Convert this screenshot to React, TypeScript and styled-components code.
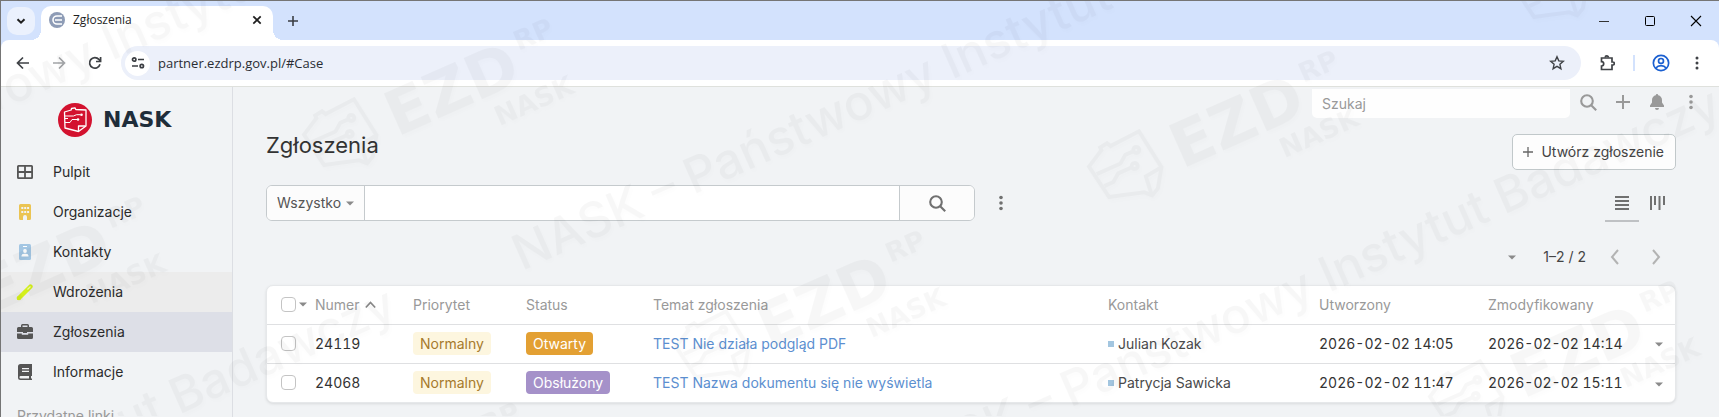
import React from 'react';
import styled, { createGlobalStyle } from 'styled-components';

const GlobalStyle = createGlobalStyle`
  *, *::before, *::after { box-sizing: border-box; }
  body { margin: 0; background: #f1f3f5; }
  button, input, select { font: inherit; color: inherit; }
`;

const ui = `Inter, "Liberation Sans", sans-serif`;
const chrome = `"Open Sans", "Noto Sans", sans-serif`;

/* ---------- browser frame ---------- */

const Window = styled.div`
  position: relative;
  display: flex;
  flex-direction: column;
  height: 100vh;
  overflow: hidden;
  border-top: 1px solid #757575;
  border-left: 1px solid #757575;
  background: #d3e2fd;
  font-family: ${ui};
  font-size: 14px;
  line-height: 20px;
  color: #333;
`;

const TabStrip = styled.div`
  display: flex;
  align-items: center;
  flex: none;
  height: 39px;
  padding: 0 0 0 6px;
  font-family: ${chrome};
  font-size: 12px;
  color: #1f1f1f;
`;

const PlainButton = styled.button<{ $w?: number; $h?: number }>`
  display: inline-flex;
  align-items: center;
  justify-content: center;
  flex: none;
  width: ${p => p.$w ?? 36}px;
  height: ${p => p.$h ?? 34}px;
  padding: 0;
  border: 0;
  background: none;
  cursor: pointer;
`;

const TabSearch = styled(PlainButton)`
  margin-right: 6px;
  border-radius: 10px;
  background: #ebf1fd;
`;

const Tab = styled.div`
  position: relative;
  display: flex;
  align-items: center;
  align-self: flex-end;
  width: 232px;
  height: 34px;
  padding: 0 6px 6px 8px;
  gap: 8px;
  border-radius: 10px 10px 0 0;
  background: #fff;

  &::before, &::after {
    content: '';
    position: absolute;
    bottom: 0;
    width: 10px;
    height: 10px;
  }
  &::before { left: -10px; background: radial-gradient(circle at 0 0, transparent 10px, #fff 10px); }
  &::after { right: -10px; background: radial-gradient(circle at 100% 0, transparent 10px, #fff 10px); }
`;

const TabTitle = styled.span`
  flex: 1;
`;

const Spacer = styled.div`
  flex: 1;
`;

const Toolbar = styled.div`
  display: flex;
  align-items: center;
  flex: none;
  height: 47px;
  padding: 0 4px;
  border-bottom: 1px solid #dfe1dd;
  border-radius: 8px 8px 0 0;
  background: #fff;
`;

const AddressBar = styled.div`
  display: flex;
  align-items: center;
  flex: 1;
  height: 34px;
  margin: 0 8px;
  padding: 0 14px 0 4px;
  border-radius: 17px;
  background: #ecf0fa;
`;

const SiteInfo = styled(PlainButton)`
  border-radius: 50%;
  background: #fff;
`;

const AddressInput = styled.input`
  flex: 1;
  min-width: 0;
  height: 24px;
  padding: 0 8px;
  border: 0;
  outline: 0;
  background: none;
  font-family: ${chrome};
  font-size: 13px;
  color: #2a2d33;
`;

const Divider = styled.span`
  width: 2px;
  height: 16px;
  margin: 0 8px;
  background: #d3e2fd;
`;

/* ---------- application ---------- */

const Page = styled.div`
  display: flex;
  flex: 1;
  min-height: 0;
  background: #f1f3f5;
`;

const Sidebar = styled.nav`
  flex: none;
  width: 232px;
  border-right: 1px solid #dcdee3;
`;

const Brand = styled.a`
  display: flex;
  align-items: center;
  gap: 11px;
  height: 65px;
  padding: 0 0 0 57px;
  text-decoration: none;
  font-family: "DejaVu Sans", sans-serif;
  font-weight: 700;
  font-size: 22px;
  color: #1f2d3a;
`;

const NavList = styled.ul`
  margin: 0;
  padding: 0;
  list-style: none;
`;

const NavLink = styled.a<{ $tone?: 'hover' | 'active' }>`
  display: flex;
  align-items: center;
  height: 40px;
  padding-left: 15px;
  gap: 19px;
  color: #2b2b2b;
  text-decoration: none;
  background: ${p => (p.$tone === 'active' ? '#dddfe7' : p.$tone === 'hover' ? '#ececec' : 'transparent')};
`;

const NavCaption = styled.div`
  padding: 14px 16px;
  color: #999;
`;

const Main = styled.main`
  flex: 1;
  min-width: 0;
  padding: 2px 43px 15px 33px;
`;

const HeaderBar = styled.header`
  display: flex;
  justify-content: flex-end;
  align-items: flex-start;
  height: 29px;
  margin-right: -32px;
`;

const GlobalSearch = styled.input`
  width: 258px;
  height: 29px;
  padding: 0 10px;
  border: 0;
  outline: 0;
  border-radius: 0 0 5px 5px;
  background: #fefefe;
  &::placeholder { color: #999; opacity: 1; }
`;

const TitleRow = styled.div`
  display: flex;
  align-items: flex-start;
  justify-content: space-between;
  padding-top: 12px;
`;

const Title = styled.h1`
  margin: 0;
  font-size: 22px;
  line-height: 30px;
  font-weight: 400;
  color: #333;
`;

const CreateButton = styled.button`
  display: flex;
  align-items: center;
  gap: 8px;
  height: 36px;
  margin-top: 4px;
  padding: 0 11px 0 10px;
  border: 1px solid #c1c8ca;
  border-radius: 5px;
  background: #fdfdfd;
  color: #444;
  cursor: pointer;
`;

const FilterRow = styled.div`
  display: flex;
  align-items: flex-start;
  margin-top: 15px;
`;

const SearchGroup = styled.form`
  display: flex;
  flex: 0 1 709px;
  height: 36px;
  border: 1px solid #c5cacd;
  border-radius: 6px;
  background: #fff;
  overflow: hidden;
`;

const Picker = styled.div`
  display: grid;
  grid-template-columns: 97px;
  align-items: center;
  border-right: 1px solid #c5cacd;
  background: #fcfcfc;
  & > * { grid-area: 1 / 1; }
  & > svg { justify-self: end; margin-right: 10px; pointer-events: none; }
`;

const PickerSelect = styled.select`
  appearance: none;
  height: 34px;
  width: 97px;
  padding: 0 10px;
  border: 0;
  outline: 0;
  background: none;
  color: #555;
`;

const SearchInput = styled.input`
  flex: 1;
  min-width: 0;
  border: 0;
  outline: 0;
  padding: 0 10px;
  background: #fff;
`;

const SearchButton = styled(PlainButton)`
  border-left: 1px solid #c5cacd;
  background: #fcfcfc;
`;

const ViewButton = styled(PlainButton)<{ $on?: boolean }>`
  border-bottom: 2px solid ${p => (p.$on ? '#bfc1c4' : 'transparent')};
`;

const Pager = styled.div`
  display: flex;
  align-items: center;
  justify-content: flex-end;
  height: 40px;
  margin-top: 15px;
  color: #444;
`;

const Range = styled.span`
  margin: 0 8px 0 14px;
`;

const Card = styled.div`
  margin-top: 8px;
  overflow: hidden;
  border: 1px solid #e6e8ea;
  border-radius: 7px;
  background: #fff;
  box-shadow: 0 1px 3px rgba(0, 0, 0, 0.1);
`;

const Table = styled.table`
  width: 100%;
  table-layout: fixed;
  border-collapse: collapse;

  th, td {
    padding: 0;
    text-align: left;
    font-weight: 400;
    white-space: nowrap;
  }
  th { height: 38px; color: #999; }
  td { height: 39px; border-top: 1px solid #dfe0e2; }
  th:first-child, td:first-child { padding-left: 14px; }
`;

const Col = styled.col<{ $w?: number }>`
  width: ${p => (p.$w ? `${p.$w}px` : 'auto')};
`;

const Inline = styled.span<{ $gap: number }>`
  display: flex;
  align-items: center;
  gap: ${p => p.$gap}px;
`;

const Checkbox = styled.input`
  appearance: none;
  display: block;
  flex: none;
  width: 15px;
  height: 15px;
  margin: 0;
  border: 1px solid #c4c4c4;
  border-radius: 4px;
  background: #fff;
`;

const tones = {
  warn: ['#fdf6df', '#a67a2c'],
  open: ['#e3a033', '#fff'],
  done: ['#a591c9', '#fff'],
};

const Badge = styled.span<{ $tone: keyof typeof tones }>`
  display: block;
  width: fit-content;
  height: 23px;
  padding: 0 7px;
  border-radius: 4px;
  line-height: 23px;
  background: ${p => tones[p.$tone][0]};
  color: ${p => tones[p.$tone][1]};
`;

const SubjectLink = styled.a`
  color: #5c8fd0;
  text-decoration: none;
`;

const ContactLink = styled.a`
  display: flex;
  align-items: center;
  gap: 4px;
  color: #4a4a4a;
  text-decoration: none;
  &::before { content: ''; width: 6px; height: 6px; background: #a3c6e0; }
`;

const Figures = styled.span`
  font-variant-numeric: tabular-nums;
`;

const Overlay = styled.svg`
  position: absolute;
  top: -1px;
  left: -1px;
  width: 100%;
  height: 100%;
  pointer-events: none;
  filter: drop-shadow(2px 3px 2px rgba(0, 0, 0, 0.4));
  opacity: 0.028;
`;

/* ---------- icons ---------- */

const Caret = ({ color = '#8a8a8a' }: { color?: string }) => (
  <svg width="8" height="5" viewBox="0 0 8 5" aria-hidden="true"><path d="M0 .5h8L4 4.5z" fill={color} /></svg>
);

const Dots = ({ color, r = 1.8, step = 5.5 }: { color: string; r?: number; step?: number }) => (
  <svg width="6" height="16" viewBox="0 0 6 16" fill={color} aria-hidden="true">
    <circle cx="3" cy={8 - step} r={r} /><circle cx="3" cy="8" r={r} /><circle cx="3" cy={8 + step} r={r} />
  </svg>
);

const Magnifier = ({ color }: { color: string }) => (
  <svg width="17" height="17" viewBox="0 0 17 17" fill="none" stroke={color} strokeWidth="2.1" aria-hidden="true">
    <circle cx="7" cy="7" r="5.8" /><path d="M11.2 11.2 16.2 16.2" />
  </svg>
);

const Plus = ({ size, color, w }: { size: number; color: string; w: number }) => (
  <svg width={size} height={size} viewBox="0 0 14 14" fill="none" stroke={color} strokeWidth={w} aria-hidden="true">
    <path d="M7 0v14M0 7h14" />
  </svg>
);

const Chevron = ({ d }: { d: string }) => (
  <svg width="16" height="16" viewBox="0 0 16 16" fill="none" stroke="#b3b3b3" strokeWidth="2" aria-hidden="true"><path d={d} /></svg>
);

const ChromeIcon = ({ children, color = '#3f4246', w = 1.7, size = 16 }: { children: React.ReactNode; color?: string; w?: number; size?: number }) => (
  <svg width={size} height={size} viewBox="0 0 16 16" fill="none" stroke={color} strokeWidth={w} aria-hidden="true">{children}</svg>
);

/* Outline of the country with circuit traces and a folded corner. */
const emblem = 'M2 8 11 3 11 1.5 15 1 16 3 32 2 35 23 29 32 25 34 22 31 12 28 5 26Z';

const BrandMark = () => (
  <svg width="34" height="34" viewBox="0 0 34 34" fill="none" aria-hidden="true">
    <circle cx="17" cy="17" r="17" fill="#d3122f" />
    <g stroke="#fff" strokeWidth="1.3" strokeLinejoin="round">
      <path d="M6.5 9 13.200 7l.3-1.500 3.500-.7.8 1.700 10.200.5v16L20.500 28.500 7 25Z" />
      <path d="M20.500 28.500v-5.500h7" />
      <path d="M7 13h8.500l3-1.300h4M7 19.500h5l2-3h5M7 15.500h3" strokeWidth="1" />
    </g>
    <circle cx="23.500" cy="11.700" r="1.300" fill="#fff" /><circle cx="20" cy="16.500" r="1.300" fill="#fff" />
  </svg>
);

const icons: Record<string, React.ReactNode> = {
  grid: <path fillRule="evenodd" fill="#555" d="M3.500 2h13a1.500 1.500 0 0 1 1.500 1.500v11a1.500 1.500 0 0 1-1.500 1.500h-13A1.500 1.500 0 0 1 2 14.500v-11A1.500 1.500 0 0 1 3.500 2Zm.3 1.800v4.300h5.300V3.800Zm7.100 0v4.300h5.300V3.800Zm-7.100 6.100v4.300h5.300V9.900Zm7.100 0v4.300h5.300V9.900Z" />,
  building: <path fillRule="evenodd" fill="#ebc453" d="M5.500 1h9A1.500 1.500 0 0 1 16 2.500v13a1.500 1.500 0 0 1-1.500 1.500H12v-3a2 2 0 0 0-4 0v3H5.500A1.500 1.500 0 0 1 4 15.500v-13A1.500 1.500 0 0 1 5.500 1Zm.8 3v2h2V4Zm2.900 0v2h2V4Zm2.900 0v2h2V4Zm-5.800 4v2h2V8Zm2.900 0v2h2V8Zm2.900 0v2h2V8Z" />,
  badge: <><rect x="4" y="1" width="12" height="16" rx="1.500" fill="#a3c6e3" /><path d="M8 3h4v1H8z" fill="#fff" /><circle cx="10" cy="8" r="1.900" fill="#fff" /><path d="M6.500 13.500a2.500 2.500 0 0 1 2.500-2.700h2a2.500 2.500 0 0 1 2.500 2.700Z" fill="#fff" /></>,
  pen: <><path d="M4 15 15.500 3.500" stroke="#d4f01c" strokeWidth="4.400" strokeLinecap="round" /><path d="m2 17 .6-4 3.400 3.400Z" fill="#d4f01c" /><path d="m12.500 6.500 3-3" stroke="#f2fbb0" strokeWidth="1.200" /></>,
  briefcase: <path fillRule="evenodd" fill="#555" d="M6 4V2.500A1.500 1.500 0 0 1 7.500 1h5A1.500 1.500 0 0 1 14 2.500V4h2.500A1.500 1.500 0 0 1 18 5.500V9h-6v1H8V9H2V5.500A1.500 1.500 0 0 1 3.500 4Zm1.500 0h5V2.500h-5ZM2 10.500h4.800v1.300h6.400v-1.300H18v4A1.500 1.500 0 0 1 16.500 16h-13A1.500 1.500 0 0 1 2 14.500Z" />,
  book: <path fillRule="evenodd" fill="#555" d="M5.500 1H17v12h-1v2.500h1V17H5.500A2.500 2.500 0 0 1 3 14.500v-11A2.500 2.500 0 0 1 5.500 1ZM7 5v1.200h7V5Zm0 2.800V9h7V7.800ZM5.700 13a1.200 1.200 0 0 0 0 2.500H14V13Z" />,
};

const NavIcon = ({ name }: { name: string }) => (
  <svg width="18" height="18" viewBox="1 0 18 18" aria-hidden="true">{icons[name]}</svg>
);

/* ---------- watermark ---------- */

const slogans = [[522, 271], [899, 484], [-318, 252], [-426, 684]];
const logos = [[397, 137], [1182, 169], [769, 349], [1523, 399], [-11, 315], [1607, -11], [364, 521]];

const Watermark = () => (
  <Overlay aria-hidden="true">
    {slogans.map(([x, y]) => (
      <text key={x} transform={`translate(${x} ${y}) rotate(-24)`} fontFamily="Inter, sans-serif" fontWeight="500" fontSize="49">
        NASK – Państwowy Instytut Badawczy
      </text>
    ))}
    {logos.map(([x, y]) => (
      <g key={x} transform={`translate(${x} ${y}) rotate(-24)`} fontFamily="DejaVu Sans, sans-serif" fontWeight="700">
        <g transform="translate(-88 -56) scale(2)" fill="none" stroke="#000" strokeWidth="2">
          <path d={emblem} />
          <path d="M25 33 26 24 35 23M4 13h13l4-3h5M5 20h5l4-3h8" />
          <circle cx="27" cy="10" r="1.500" /><circle cx="23" cy="17" r="1.500" />
        </g>
        <text fontSize="62">EZD</text>
        <text x="146" y="-29" fontSize="27">RP</text>
        <text x="98" y="32" fontSize="27">NASK</text>
      </g>
    ))}
  </Overlay>
);

/* ---------- data ---------- */

const nav: { label: string; icon: string; tone?: 'hover' | 'active' }[] = [
  { label: 'Pulpit', icon: 'grid' },
  { label: 'Organizacje', icon: 'building' },
  { label: 'Kontakty', icon: 'badge' },
  { label: 'Wdrożenia', icon: 'pen', tone: 'hover' },
  { label: 'Zgłoszenia', icon: 'briefcase', tone: 'active' },
  { label: 'Informacje', icon: 'book' },
];

const cases: { id: string; status: string; tone: 'open' | 'done'; subject: string; contact: string; created: string; modified: string }[] = [
  { id: '24119', status: 'Otwarty', tone: 'open', subject: 'TEST Nie działa podgląd PDF', contact: 'Julian Kozak', created: '2026-02-02 14:05', modified: '2026-02-02 14:14' },
  { id: '24068', status: 'Obsłużony', tone: 'done', subject: 'TEST Nazwa dokumentu się nie wyświetla', contact: 'Patrycja Sawicka', created: '2026-02-02 11:47', modified: '2026-02-02 15:11' },
];

const BrowserChrome = () => (
  <>
    <TabStrip>
      <TabSearch $w={28} $h={28} aria-label="Wyszukaj karty">
        <ChromeIcon color="#1f1f1f" w={2}><path d="m4.500 6.200 3.500 3.500 3.500-3.500" /></ChromeIcon>
      </TabSearch>
      <Tab>
        <svg width="16" height="16" viewBox="0 0 16 16" fill="none" aria-hidden="true">
          <circle cx="8" cy="8" r="8" fill="#8e9cb6" />
          <path d="M13 4H8a4 4 0 0 0 0 8h5M6 8h7" stroke="#fff" strokeWidth="1.600" />
        </svg>
        <TabTitle>Zgłoszenia</TabTitle>
        <PlainButton $w={20} $h={20} aria-label="Zamknij kartę">
          <ChromeIcon color="#1f1f1f"><path d="m4.300 4.300 7.400 7.400M11.700 4.300 4.300 11.700" /></ChromeIcon>
        </PlainButton>
      </Tab>
      <PlainButton $w={40} aria-label="Nowa karta"><Plus size={10} color="#3a3d42" w={2.2} /></PlainButton>
      <Spacer />
      <PlainButton $w={46} aria-label="Minimalizuj"><ChromeIcon color="#333" w={1}><path d="M3 8.500h10" /></ChromeIcon></PlainButton>
      <PlainButton $w={46} aria-label="Maksymalizuj"><ChromeIcon color="#000" w={1}><rect x="3.500" y="3.500" width="9" height="9" rx="1" /></ChromeIcon></PlainButton>
      <PlainButton $w={46} aria-label="Zamknij"><ChromeIcon color="#000" w={1.1}><path d="m3 3 10 10M13 3 3 13" /></ChromeIcon></PlainButton>
    </TabStrip>
    <Toolbar>
      <PlainButton aria-label="Wstecz"><ChromeIcon><path d="M14 8H3M8 2.500 2.500 8 8 13.500" /></ChromeIcon></PlainButton>
      <PlainButton aria-label="Dalej"><ChromeIcon color="#a3a5a8"><path d="M2 8h11M8 2.500 13.500 8 8 13.500" /></ChromeIcon></PlainButton>
      <PlainButton aria-label="Odśwież"><ChromeIcon><path d="M13 9.300A5.300 5.300 0 1 1 11.900 4.400L13.500 6M13.600 2v4.500H9" /></ChromeIcon></PlainButton>
      <AddressBar>
        <SiteInfo $w={25} $h={25} aria-label="Informacje o stronie">
          <ChromeIcon color="#3a3d42"><circle cx="4.200" cy="4.500" r="1.700" /><path d="M8 4.500h6M2 11h6" /><circle cx="11.800" cy="11" r="1.700" /></ChromeIcon>
        </SiteInfo>
        <AddressInput aria-label="Adres" defaultValue="partner.ezdrp.gov.pl/#Case" />
        <PlainButton $w={20} aria-label="Dodaj do zakładek">
          <ChromeIcon w={1.4}><path d="m8 1.800 1.800 4.100 4.500.4-3.400 3 1 4.400L8 11.400l-3.900 2.300 1-4.400-3.400-3 4.500-.4Z" /></ChromeIcon>
        </PlainButton>
      </AddressBar>
      <PlainButton aria-label="Rozszerzenia">
        <ChromeIcon><path d="M2.500 3H13v4h.800a1.300 1.300 0 0 1 0 3H13v4.500H2.500v-3.500a2.200 2.200 0 0 0 0-4.400Z" /><path d="M6.200 2.500a1.600 1.600 0 0 1 3.200 0" /></ChromeIcon>
      </PlainButton>
      <Divider />
      <PlainButton aria-label="Profil">
        <ChromeIcon color="#1a5fd0" size={18} w={1.5}><circle cx="8" cy="8" r="6.800" /><circle cx="8" cy="6.200" r="2.200" /><path d="M3.500 12.500c2-2.800 7-2.800 9 0" /></ChromeIcon>
      </PlainButton>
      <PlainButton aria-label="Menu przeglądarki"><Dots color="#3f4246" r={1.5} step={5} /></PlainButton>
    </Toolbar>
  </>
);

export default function App() {
  return (
    <Window>
      <GlobalStyle />
      <BrowserChrome />
      <Page>
        <Sidebar>
          <Brand href="#"><BrandMark />NASK</Brand>
          <NavList>
            {nav.map(n => (
              <li key={n.label}><NavLink href="#" $tone={n.tone}><NavIcon name={n.icon} />{n.label}</NavLink></li>
            ))}
          </NavList>
          <NavCaption>Przydatne linki</NavCaption>
        </Sidebar>
        <Main>
          <HeaderBar>
            <GlobalSearch aria-label="Szukaj" placeholder="Szukaj" />
            <PlainButton $h={26} aria-label="Szukaj w systemie"><Magnifier color="#999" /></PlainButton>
            <PlainButton $w={34} $h={26} aria-label="Dodaj"><Plus size={14} color="#999" w={2} /></PlainButton>
            <PlainButton $w={34} $h={26} aria-label="Powiadomienia">
              <svg width="16" height="16" viewBox="0 0 16 16" fill="#999" aria-hidden="true"><path d="M8 0a1.300 1.300 0 0 0-1.200 1.300C4.500 1.800 3 3.700 3 6v2.500L1 11.500V13h14v-1.500l-2-3V6c0-2.300-1.500-4.200-3.800-4.700A1.300 1.300 0 0 0 8 0ZM6 14a2 2 0 0 0 4 0Z" /></svg>
            </PlainButton>
            <PlainButton $w={34} $h={26} aria-label="Menu"><Dots color="#999" /></PlainButton>
          </HeaderBar>
          <TitleRow>
            <Title>Zgłoszenia</Title>
            <CreateButton><Plus size={10} color="#666" w={1.8} />Utwórz zgłoszenie</CreateButton>
          </TitleRow>
          <FilterRow>
            <SearchGroup>
              <Picker>
                <PickerSelect aria-label="Filtr"><option>Wszystko</option></PickerSelect>
                <Caret />
              </Picker>
              <SearchInput aria-label="Szukana fraza" />
              <SearchButton type="button" $w={75} aria-label="Wyszukaj"><Magnifier color="#707070" /></SearchButton>
            </SearchGroup>
            <PlainButton $w={52} $h={36} aria-label="Więcej"><Dots color="#707070" /></PlainButton>
            <Spacer />
            <ViewButton $on $w={34} $h={37} aria-label="Widok listy">
              <svg width="14" height="14" viewBox="0 0 14 14" aria-hidden="true"><path d="M0 1h14M0 5h14M0 9h14M0 13h14" stroke="#707070" strokeWidth="2" /></svg>
            </ViewButton>
            <ViewButton $w={37} $h={37} aria-label="Widok kanban">
              <svg width="15" height="14" viewBox="0 0 15 14" aria-hidden="true"><path d="M1 0v14M5 0v9M9.500 0v14M14 0v9" stroke="#707070" strokeWidth="2" /></svg>
            </ViewButton>
          </FilterRow>
          <Pager>
            <PlainButton $w={34} aria-label="Działania"><Caret /></PlainButton>
            <Range>1–2 / 2</Range>
            <PlainButton $w={41} aria-label="Poprzednia strona"><Chevron d="m11 1-6 7 6 7" /></PlainButton>
            <PlainButton $w={41} aria-label="Następna strona"><Chevron d="m5 1 6 7-6 7" /></PlainButton>
          </Pager>
          <Card>
            <Table>
              <colgroup>
                <Col $w={48} /><Col $w={98} /><Col $w={113} /><Col $w={127} /><Col /><Col $w={211} /><Col $w={169} /><Col $w={167} /><Col $w={20} />
              </colgroup>
              <thead>
                <tr>
                  <th><Inline $gap={3}><Checkbox type="checkbox" aria-label="Zaznacz wszystkie" /><Caret /></Inline></th>
                  <th>
                    <Inline $gap={5}>
                      Numer
                      <svg width="11" height="8" viewBox="0 0 11 8" fill="none" stroke="#888" strokeWidth="1.700" aria-hidden="true"><path d="m.8 6.500 4.700-5 4.700 5" /></svg>
                    </Inline>
                  </th>
                  <th>Priorytet</th>
                  <th>Status</th>
                  <th>Temat zgłoszenia</th>
                  <th>Kontakt</th>
                  <th>Utworzony</th>
                  <th>Zmodyfikowany</th>
                  <th aria-label="Akcje" />
                </tr>
              </thead>
              <tbody>
                {cases.map(c => (
                  <tr key={c.id}>
                    <td><Checkbox type="checkbox" aria-label={`Zaznacz ${c.id}`} /></td>
                    <td><Figures>{c.id}</Figures></td>
                    <td><Badge $tone="warn">Normalny</Badge></td>
                    <td><Badge $tone={c.tone}>{c.status}</Badge></td>
                    <td><SubjectLink href="#">{c.subject}</SubjectLink></td>
                    <td><ContactLink href="#">{c.contact}</ContactLink></td>
                    <td><Figures>{c.created}</Figures></td>
                    <td><Figures>{c.modified}</Figures></td>
                    <td><PlainButton $w={8} $h={20} aria-label={`Akcje ${c.id}`}><Caret /></PlainButton></td>
                  </tr>
                ))}
              </tbody>
            </Table>
          </Card>
        </Main>
      </Page>
      <Watermark />
    </Window>
  );
}
